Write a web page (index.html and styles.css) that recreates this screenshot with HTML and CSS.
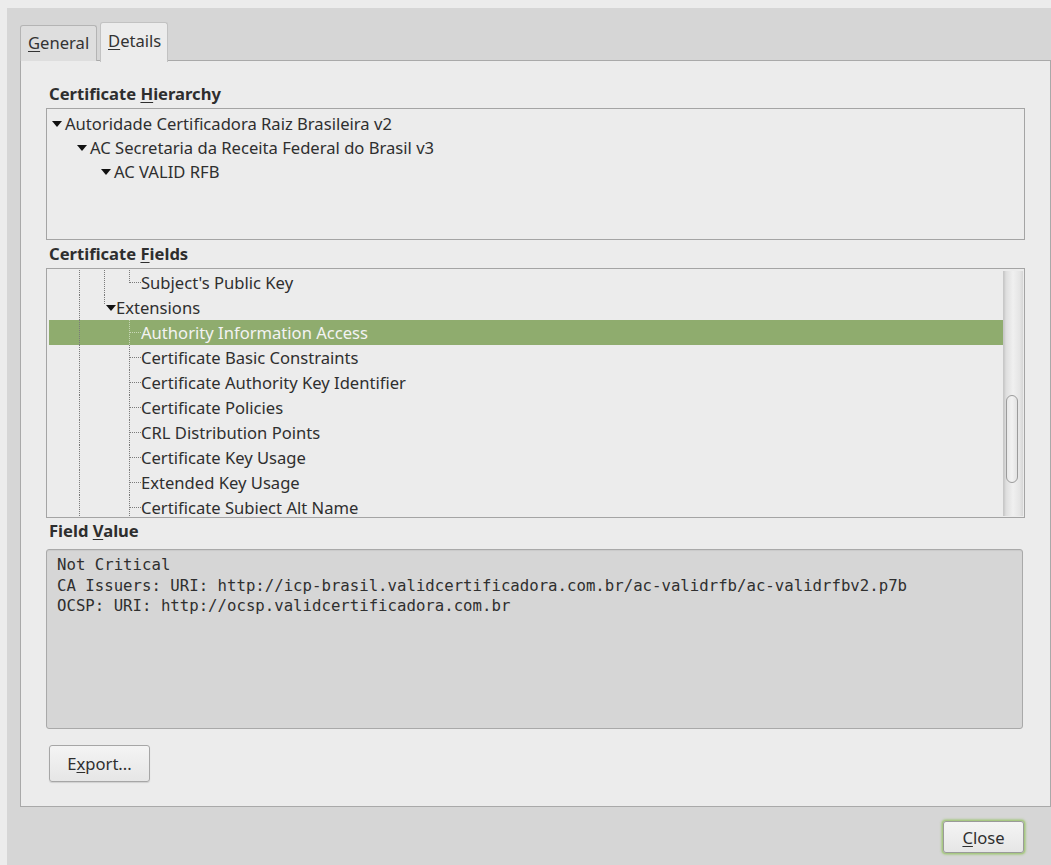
FILE: index.html
```html
<!DOCTYPE html>
<html lang="en">
<head>
<meta charset="utf-8">
<title>Certificate Viewer</title>
<link rel="stylesheet" href="styles.css">
</head>
<body>
<div class="window">
  <div class="tabs">
    <div class="tab"><u>G</u>eneral</div>
    <div class="tab active"><u>D</u>etails</div>
  </div>

  <div class="panel">
    <div class="section-title">Certificate <u>H</u>ierarchy</div>
    <div class="tree hierarchy">
      <div class="hrow lvl0"><span class="expander"></span>Autoridade Certificadora Raiz Brasileira v2</div>
      <div class="hrow lvl1"><span class="expander"></span>AC Secretaria da Receita Federal do Brasil v3</div>
      <div class="hrow lvl2"><span class="expander"></span>AC VALID RFB</div>
    </div>

    <div class="section-title fields-title">Certificate <u>F</u>ields</div>
    <div class="tree fields">
      <div class="rows">
        <div class="frow">
          <span class="cell vline"></span><span class="cell vline"></span><span class="cell elbow"></span>
          <span class="label">Subject's Public Key</span>
        </div>
        <div class="frow">
          <span class="cell vline"></span><span class="cell expand-cell"><span class="expander"></span></span>
          <span class="label">Extensions</span>
        </div>
        <div class="frow selected">
          <span class="cell vline"></span><span class="cell"></span><span class="cell tee"></span>
          <span class="label">Authority Information Access</span>
        </div>
        <div class="frow">
          <span class="cell vline"></span><span class="cell"></span><span class="cell tee"></span>
          <span class="label">Certificate Basic Constraints</span>
        </div>
        <div class="frow">
          <span class="cell vline"></span><span class="cell"></span><span class="cell tee"></span>
          <span class="label">Certificate Authority Key Identifier</span>
        </div>
        <div class="frow">
          <span class="cell vline"></span><span class="cell"></span><span class="cell tee"></span>
          <span class="label">Certificate Policies</span>
        </div>
        <div class="frow">
          <span class="cell vline"></span><span class="cell"></span><span class="cell tee"></span>
          <span class="label">CRL Distribution Points</span>
        </div>
        <div class="frow">
          <span class="cell vline"></span><span class="cell"></span><span class="cell tee"></span>
          <span class="label">Certificate Key Usage</span>
        </div>
        <div class="frow">
          <span class="cell vline"></span><span class="cell"></span><span class="cell tee"></span>
          <span class="label">Extended Key Usage</span>
        </div>
        <div class="frow">
          <span class="cell vline"></span><span class="cell"></span><span class="cell tee"></span>
          <span class="label">Certificate Subiect Alt Name</span>
        </div>
      </div>
      <div class="scrollbar"><div class="thumb"></div></div>
    </div>

    <div class="section-title value-title">Field <u>V</u>alue</div>
    <pre class="value">Not Critical
CA Issuers: URI: http://icp-brasil.validcertificadora.com.br/ac-validrfb/ac-validrfbv2.p7b
OCSP: URI: http://ocsp.validcertificadora.com.br</pre>

    <button class="btn export">E<u>x</u>port...</button>
  </div>

  <div class="actions">
    <button class="btn close"><u>C</u>lose</button>
  </div>
</div>
</body>
</html>
```

FILE: styles.css
```css
html, body {
  margin: 0;
  padding: 0;
}

body {
  background: #ececec;
  font-family: "Noto Sans", "DejaVu Sans", sans-serif;
  font-size: 16.6px;
  color: #2f2f2f;
  width: 1051px;
  height: 865px;
  overflow: hidden;
}

u {
  text-decoration-thickness: 1px;
  text-underline-offset: 2px;
}

.window {
  margin: 8px 0 0 7px;
  height: 857px;
  background: #d6d6d6;
  padding-left: 13px;
  box-sizing: border-box;
  display: flex;
  flex-direction: column;
}

/* notebook tabs */
.tabs {
  display: flex;
  align-items: flex-end;
  gap: 3px;
  margin-top: 13px;
  height: 40px;
  position: relative;
  z-index: 1;
}

.tab {
  box-sizing: border-box;
  height: 36px;
  padding: 0 7px 0 7px;
  border: 1px solid #b4b4b4;
  border-bottom: none;
  border-radius: 3px 3px 0 0;
  background: #dedede;
  line-height: 34px;
  color: #333;
  white-space: nowrap;
}

.tab:first-child {
  width: 77px;
}

.tab.active {
  height: 40px;
  width: 68px;
  background: #ececec;
  line-height: 36px;
  border-color: #c2c2c2;
  margin-bottom: -1px;
}

/* notebook page */
.panel {
  box-sizing: border-box;
  width: 1031px;
  height: 747px;
  margin-top: -1px;
  border: 1px solid #a9a9a9;
  background: #ececec;
  padding: 23px 24px 0 25px;
  display: flex;
  flex-direction: column;
  align-items: flex-start;
}

.section-title {
  font-weight: bold;
  line-height: 20px;
  padding-left: 3px;
  color: #2e2e2e;
  margin-bottom: 4px;
}

.fields-title {
  margin-top: 4px;
  margin-bottom: 4px;
}

.value-title {
  margin-top: 3px;
  margin-bottom: 8px;
}

.tree {
  box-sizing: border-box;
  width: 979px;
  border: 1px solid #a4a4a4;
  background: #ececec;
}

/* hierarchy tree */
.hierarchy {
  height: 132px;
  padding: 3px 2px;
}

.hrow {
  height: 24px;
  line-height: 24px;
  display: flex;
  align-items: center;
  white-space: nowrap;
}

.hrow.lvl0 { padding-left: 3px; }
.hrow.lvl1 { padding-left: 28px; }
.hrow.lvl2 { padding-left: 52px; }

.expander {
  width: 0;
  height: 0;
  border-left: 5.5px solid transparent;
  border-right: 5.5px solid transparent;
  border-top: 6px solid #111;
  margin-right: 3px;
  flex: none;
}

/* certificate fields tree */
.fields {
  height: 250px;
  display: flex;
  padding: 1px;
  overflow: hidden;
}

.rows {
  flex: 1;
  padding: 0 0 0 1px;
  overflow: hidden;
}

.frow {
  height: 25px;
  display: flex;
  align-items: stretch;
  padding-left: 18px;
  white-space: nowrap;
}

.frow .label {
  line-height: 25px;
  margin-left: -1px;
}

.frow.selected {
  background: #8fac6e;
  color: #f3f3f3;
}

.cell {
  width: 25px;
  flex: none;
  display: flex;
  align-items: center;
  justify-content: flex-end;
}

/* dotted tree guides */
.vline {
  background: repeating-linear-gradient(to bottom, #7a7a7a 0 1px, transparent 1px 2px) no-repeat 12px 0 / 1px 100%;
}

.tee {
  background:
    repeating-linear-gradient(to bottom, #7a7a7a 0 1px, transparent 1px 2px) no-repeat 12px 0 / 1px 100%,
    repeating-linear-gradient(to right, #7a7a7a 0 1px, transparent 1px 2px) no-repeat 13px 12px / 11px 1px;
}

.elbow {
  background:
    repeating-linear-gradient(to bottom, #7a7a7a 0 1px, transparent 1px 2px) no-repeat 12px 0 / 1px 13px,
    repeating-linear-gradient(to right, #7a7a7a 0 1px, transparent 1px 2px) no-repeat 13px 12px / 11px 1px;
}

.selected .tee {
  background:
    repeating-linear-gradient(to bottom, #c9d8b8 0 1px, transparent 1px 2px) no-repeat 12px 0 / 1px 100%,
    repeating-linear-gradient(to right, #c9d8b8 0 1px, transparent 1px 2px) no-repeat 13px 12px / 11px 1px;
}

.expand-cell {
  background: repeating-linear-gradient(to bottom, #7a7a7a 0 1px, transparent 1px 2px) no-repeat 12px 0 / 1px 9px;
}

.expand-cell .expander {
  margin-right: 1px;
}

.scrollbar {
  width: 20px;
  flex: none;
  margin: 1px 0 0;
  background: linear-gradient(to right, #c9c9c9 0, #dedede 2px, #f0f0f0 9px, #e4e4e4 16px, #d2d2d2 20px);
  border-left: 1px solid #c8c8c8;
  padding-top: 124px;
  box-sizing: border-box;
}

.thumb {
  width: 12px;
  height: 88px;
  margin-left: 2px;
  box-sizing: border-box;
  border: 1px solid #9b9b9b;
  border-radius: 6px;
  background: linear-gradient(to right, #e8e8e8, #f2f2f2 50%, #e2e2e2);
}

/* field value text view */
.value {
  box-sizing: border-box;
  width: 977px;
  height: 180px;
  margin: 0;
  padding: 5px 10px;
  background: #d6d6d6;
  border: 1px solid #a9a9a9;
  border-radius: 3px;
  box-shadow: inset 0 1px 1px rgba(0, 0, 0, 0.06);
  font-family: "DejaVu Sans Mono", monospace;
  font-size: 15.7px;
  line-height: 20.5px;
  color: #2f2f2f;
}

/* buttons */
.btn {
  box-sizing: border-box;
  font-family: "Noto Sans", "DejaVu Sans", sans-serif;
  font-size: 16.6px;
  color: #2f2f2f;
  border: 1px solid #a6a6a6;
  border-radius: 3px;
  background: linear-gradient(to bottom, #f4f4f4, #e6e6e6);
  box-shadow: 0 1px 1px rgba(0, 0, 0, 0.12);
  padding: 0;
}

.export {
  margin-top: 16px;
  margin-left: 3px;
  width: 101px;
  height: 37px;
}

.actions {
  display: flex;
  justify-content: flex-end;
  padding: 14px 27px 0 0;
}

.close {
  width: 81px;
  height: 32px;
  border-color: #9a9a9a;
  box-shadow: 0 0 0 1px #a8c884, 0 0 2px 2px rgba(160, 198, 118, 0.7);
}
```
